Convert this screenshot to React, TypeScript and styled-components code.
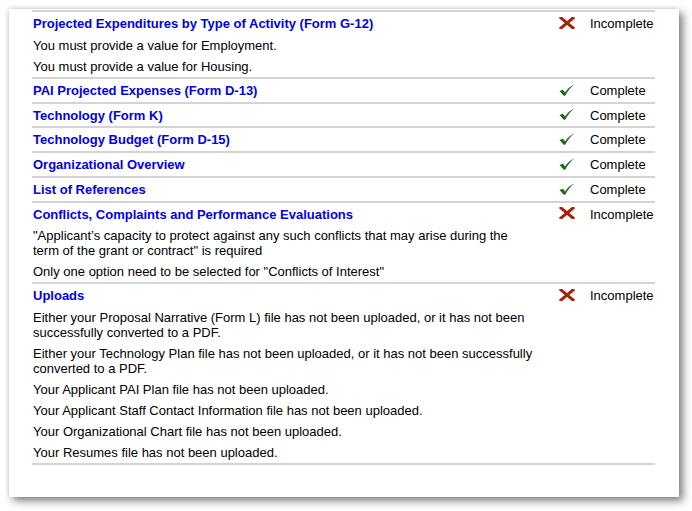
import React from "react";
import styled, { createGlobalStyle } from "styled-components";

const GlobalStyle = createGlobalStyle`
  html, body { margin: 0; padding: 0; background: #ffffff; }
  body { font-family: "Liberation Sans", Arial, sans-serif; }
`;

const Page = styled.div`
  width: 692px;
  height: 511px;
  padding: 9px 0 0 9px;
  box-sizing: border-box;
  overflow: hidden;
`;

const Panel = styled.div`
  width: 670px;
  height: 488px;
  box-sizing: border-box;
  background: #ffffff;
  padding: 1px 24px 0 23px;
  box-shadow: 4px 4px 8px rgba(0, 0, 0, 0.5), -1px -1px 4px rgba(0, 0, 0, 0.12);
`;

const List = styled.div`
  display: flex;
  flex-direction: column;
  border-bottom: 2px solid #d4d4d4;
`;

const Section = styled.div`
  display: grid;
  grid-template-columns: 527px 31px 64px;
  border-top: 2px solid #d4d4d4;
  font-size: 13px;
`;

const Title = styled.div`
  grid-column: 1;
  padding: 4px 24px 3px 1px;
  line-height: 15.75px;
  color: #0000ee;
  font-weight: bold;
`;

const IconCell = styled.div`
  grid-column: 2;
  display: flex;
  align-items: center;
  justify-content: flex-start;
  padding-bottom: 1px;
`;

const Status = styled.div`
  grid-column: 3;
  padding: 4px 0 3px 0;
  line-height: 15.75px;
  color: #000;
  white-space: nowrap;
`;

const Message = styled.div`
  grid-column: 1;
  padding: 3px 24px 3px 1px;
  line-height: 15px;
  color: #000;
`;

const Cross = () => (
  <svg width="16" height="12" viewBox="0 0 16 12">
    <path d="M2 1 L14 11 M14 1 L2 11" stroke="#a32208" strokeWidth="3" strokeLinecap="square" fill="none" />
  </svg>
);

const Check = () => (
  <svg width="16" height="12" viewBox="0 0 16 12">
    <path d="M0.5 7 L4 5.8 L6 8.5 C8 5.5 11 2.5 15.5 0.3 C11.5 3.5 8.5 7 6.2 11.8 L4.8 11.8 Z" fill="#1b6a1b" />
  </svg>
);

type Item = { title: string; done: boolean; messages: string[] };

const items: Item[] = [
  {
    title: "Projected Expenditures by Type of Activity (Form G-12)",
    done: false,
    messages: ["You must provide a value for Employment.", "You must provide a value for Housing."],
  },
  { title: "PAI Projected Expenses (Form D-13)", done: true, messages: [] },
  { title: "Technology (Form K)", done: true, messages: [] },
  { title: "Technology Budget (Form D-15)", done: true, messages: [] },
  { title: "Organizational Overview", done: true, messages: [] },
  { title: "List of References", done: true, messages: [] },
  {
    title: "Conflicts, Complaints and Performance Evaluations",
    done: false,
    messages: [
      "\"Applicant\u2019s capacity to protect against any such conflicts that may arise during the term of the grant or contract\" is required",
      "Only one option need to be selected for \"Conflicts of Interest\"",
    ],
  },
  {
    title: "Uploads",
    done: false,
    messages: [
      "Either your Proposal Narrative (Form L) file has not been uploaded, or it has not been successfully converted to a PDF.",
      "Either your Technology Plan file has not been uploaded, or it has not been successfully converted to a PDF.",
      "Your Applicant PAI Plan file has not been uploaded.",
      "Your Applicant Staff Contact Information file has not been uploaded.",
      "Your Organizational Chart file has not been uploaded.",
      "Your Resumes file has not been uploaded.",
    ],
  },
];

export default function App() {
  return (
    <>
      <GlobalStyle />
      <Page>
        <Panel>
          <List>
            {items.map((it) => (
              <Section key={it.title}>
                <Title>{it.title}</Title>
                <IconCell>{it.done ? <Check /> : <Cross />}</IconCell>
                <Status>{it.done ? "Complete" : "Incomplete"}</Status>
                {it.messages.map((m) => (
                  <Message key={m}>{m}</Message>
                ))}
              </Section>
            ))}
          </List>
        </Panel>
      </Page>
    </>
  );
}
